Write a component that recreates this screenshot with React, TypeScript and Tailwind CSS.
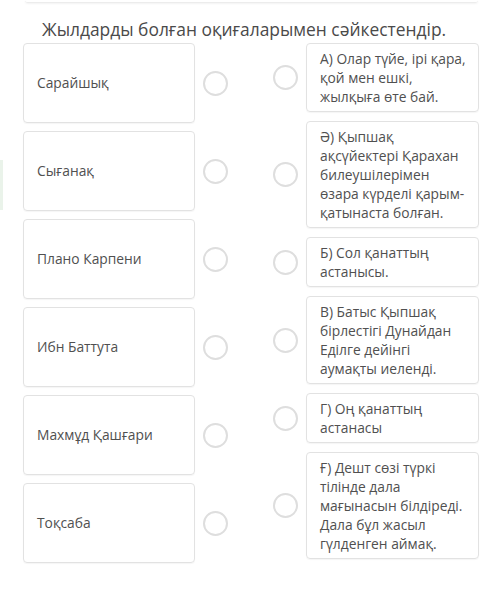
import React from "react";

const left = ["Сарайшық", "Сығанақ", "Плано Карпени", "Ибн Баттута", "Махмұд Қашғари", "Тоқсаба"];
const right = [
  ["А) Олар түйе, ірі қара,", "қой мен ешкі,", "жылқыға өте бай."],
  ["Ә) Қыпшақ", "ақсүйектері Қарахан", "билеушілерімен", "өзара күрделі қарым-", "қатынаста болған."],
  ["Б) Сол қанаттың", "астанысы."],
  ["В) Батыс Қыпшақ", "бірлестігі Дунайдан", "Еділге дейінгі", "аумақты иеленді."],
  ["Г) Оң қанаттың", "астанасы"],
  ["Ғ) Дешт сөзі түркі", "тілінде дала", "мағынасын білдіреді.", "Дала бұл жасыл", "гүлденген аймақ."],
];

function Circle() {
  return <div className="w-[25px] h-[25px] rounded-full border-[2.5px] border-[#dedede] bg-white shrink-0" />;
}

export default function App() {
  return (
    <div
      className="relative w-[500px] h-[593px] bg-white overflow-hidden text-[#505050]"
      style={{ fontFamily: '"Open Sans", "Noto Sans", sans-serif' }}
    >
      <div className="absolute left-0 top-[160px] w-[3px] h-[50px] bg-[#eaf3ea]" />
      <div className="ml-[25px] w-[453px] h-[3px] rounded-b-[3px] border-b border-[#ececec] shadow-[0_1px_2px_rgba(0,0,0,0.05)]" />
      <div className="pl-[42px] mt-[13px] text-[17.4px] leading-[26px] text-[#4a4a4a]">
        Жылдарды болған оқиғаларымен сәйкестендір.
      </div>
      <div className="flex mt-[1px] pl-[23px]">
        <div className="flex flex-col gap-[8px]">
          {left.map((t) => (
            <div key={t} className="flex items-center gap-[8px]">
              <div className="w-[172px] h-[80px] border border-[#e2e2e2] rounded-[4px] shadow-[0_1px_1px_rgba(0,0,0,0.04)] flex items-center pl-[13px] text-[13.8px]">
                {t}
              </div>
              <Circle />
            </div>
          ))}
        </div>
        <div className="flex flex-col gap-[9px] ml-[45px]">
          {right.map((lines, i) => (
            <div key={i} className="flex items-center gap-[8px]">
              <Circle />
              <div className="w-[173px] border border-[#e2e2e2] rounded-[4px] shadow-[0_1px_1px_rgba(0,0,0,0.04)] pl-[13px] pr-[4px] py-[5px] text-[13.8px] leading-[19px]">
                {lines.map((l, j) => (
                  <div key={j} className="whitespace-nowrap">{l}</div>
                ))}
              </div>
            </div>
          ))}
        </div>
      </div>
    </div>
  );
}
